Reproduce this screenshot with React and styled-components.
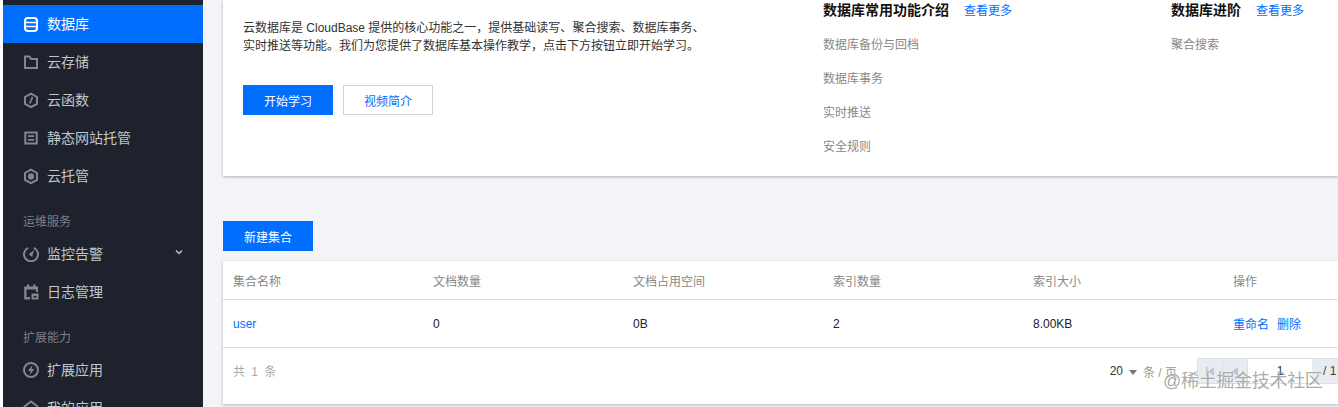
import React from "react";
import styled, { createGlobalStyle } from "styled-components";

const Global = createGlobalStyle`
  html, body { margin: 0; padding: 0; height: 407px; overflow: hidden; background: #fff; }
  body { font-family: "Liberation Sans", "Noto Sans CJK SC", sans-serif; font-size: 12px; color: #000; }
`;

const Page = styled.div`
  display: flex; width: 1338px; height: 407px; padding-left: 3px; box-sizing: border-box;
  overflow: hidden; position: relative;
`;
const Sidebar = styled.nav`
  flex: 0 0 200px; background: #1e222d; padding-top: 5px; overflow: hidden;
`;
const NavItem = styled.div`
  display: flex; align-items: center; height: 38px; padding-left: 20px; font-size: 14px;
  color: ${p => (p.$active ? "#fff" : "#c1c6c8")};
  background: ${p => (p.$active ? "#006eff" : "transparent")};
  svg { flex: 0 0 16px; width: 16px; height: 16px; margin-right: 8px; color: ${p => (p.$active ? "#fff" : "#83868d")}; }
`;
const NavLabel = styled.span`flex: 1; margin-top: -2px;`;
const Chevron = styled.svg`
  && { flex: 0 0 8px; width: 8px; height: 6px; margin: 0 20px 4px 0; color: #c1c6c8; }
`;
const GroupLabel = styled.div`
  padding: 15px 0 1px 20px; height: 24px; line-height: 24px; font-size: 12px; color: #7b7f88;
`;
const Main = styled.main`
  flex: 1; min-width: 0; background: #f2f4f8; padding-left: 20px;
`;
const Card = styled.section`
  background: #fff; box-shadow: 0 1px 3px rgba(0, 0, 0, 0.28);
`;
const IntroCard = styled(Card)`
  display: flex; height: 176px; padding-left: 20px;
`;
const Intro = styled.div`flex: 0 0 580px; padding-top: 19px;`;
const IntroText = styled.p`margin: 0 0 30px; line-height: 18px; font-size: 12px; color: #333;`;
const ButtonRow = styled.div`display: flex; gap: 10px;`;
const Button = styled.button`
  width: 90px; height: 30px; padding: 0; box-sizing: border-box; font: inherit; font-size: 12px;
  background: ${p => (p.$plain ? "#fff" : "#006eff")};
  color: ${p => (p.$plain ? "#006eff" : "#fff")};
  border: ${p => (p.$plain ? "1px solid #cfd5de" : "0")};
`;
const Topic = styled.div`flex: 0 0 ${p => p.$width}px;`;
const TopicHead = styled.div`display: flex; align-items: center; height: 18px; gap: 15px;`;
const TopicTitle = styled.h3`margin: 0; font-size: 14px; font-weight: 700; color: #111;`;
const Link = styled.a`color: #006eff; font-size: 12px;`;
const TopicList = styled.ul`margin: 18px 0 0; padding: 0; list-style: none;`;
const TopicItem = styled.li`height: 18px; line-height: 18px; margin-bottom: 16px; color: #888;`;
const NewBar = styled.div`padding: 45px 0 10px;`;
const Row = styled.div`
  display: grid; grid-template-columns: repeat(6, 200px); align-items: center;
  height: ${p => p.$h}px; border-bottom: 1px solid #dcdfe4;
  color: ${p => (p.$head ? "#888" : "#222")};
`;
const Cell = styled.div`padding-left: 10px;`;
const Actions = styled(Cell)`display: flex; gap: 8px;`;
const Footer = styled.div`
  display: flex; align-items: flex-start; height: 56px; padding: 10px 0 0 10px; box-sizing: border-box;
`;
const Total = styled.div`flex: 1; line-height: 26px; color: #aaa; word-spacing: 3px; padding-top: 1px;`;
const PageSize = styled.div`display: flex; align-items: center; height: 26px; color: #333;`;
const Caret = styled.i`
  width: 0; height: 0; margin: 2px 6px 0 6px; border: 4px solid transparent; border-top: 5px solid #777; border-bottom: 0;
`;
const PageUnit = styled.span`color: #999; margin-right: 20px;`;
const Pager = styled.div`display: flex; height: 26px; border: 1px solid #dcdfe4; border-right: 0; box-sizing: border-box;`;
const PageBtn = styled.div`
  width: 25px; display: flex; align-items: center; justify-content: center; background: #e8ebf0;
  border-right: 1px solid #dcdfe4; box-sizing: border-box; color: #c2c6cc;
  svg { width: 8px; height: 9px; }
`;
const PageInput = styled.div`
  width: 64px; text-align: center; line-height: 24px; color: #333; background: #fff;
`;
const PageTotal = styled.div`width: 26px; background: #e8ebf0; line-height: 24px; padding-left: 11px; box-sizing: border-box; white-space: nowrap; color: #444;`;
const Watermark = styled.div`
  position: absolute; left: 1163px; top: 369px; font-size: 18px; line-height: 24px; white-space: nowrap;
  letter-spacing: -0.3px; color: rgba(130, 130, 130, 0.68); text-shadow: 0 0 1px rgba(255,255,255,.9);
`;

const Ico = ({ children, fill }) => (
  <svg viewBox="0 0 16 16" fill={fill ? "currentColor" : "none"} stroke={fill ? "none" : "currentColor"} strokeWidth="2">{children}</svg>
);

const hex = "M8 1.600l6 3.400v6.800l-6 3.400-6-3.400V5z";

const items1 = [
  ["数据库", <Ico><rect x="2" y="2" width="12" height="13" rx="3" /><path d="M2 6.500h12M2 10.500h12" strokeWidth="1.700" /></Ico>, true],
  ["云存储", <Ico><path d="M2 2.500h4.500l1.500 2.500h6v9H2z" /></Ico>],
  ["云函数", <Ico><path d={hex} /><path d="M9.500 5L6.800 11.500" strokeWidth="1.800" /></Ico>],
  ["静态网站托管", <Ico><path d="M2.300 2.600h11.400v10.800H2.300z" /><path d="M5 6.200h6M5 9.800h6" strokeWidth="1.800" /></Ico>],
  ["云托管", <Ico><path d={hex} /><circle cx="8" cy="8.400" r="3.100" fill="currentColor" stroke="none" /></Ico>],
];

const topics1 = ["数据库备份与回档", "数据库事务", "实时推送", "安全规则"];

export default function App() {
  return (
    <Page>
      <Global />
      <Sidebar>
        {items1.map(([t, icon, active]) => (
          <NavItem key={t} $active={active}>{icon}<NavLabel>{t}</NavLabel></NavItem>
        ))}
        <GroupLabel>运维服务</GroupLabel>
        <NavItem>
          <Ico><path d="M5.200 1.800A7 7 0 1 0 10.800 1.800" /><path d="M11 4L9.200 10.800 5.600 8.600z" fill="currentColor" stroke="none" /></Ico>
          <NavLabel>监控告警</NavLabel>
          <Chevron viewBox="0 0 8 6" fill="none" stroke="currentColor" strokeWidth="1.500"><path d="M1 1.500l3 3 3-3" /></Chevron>
        </NavItem>
        <NavItem>
          <Ico fill><path d="M4 0.500h2.200V2.500h4V0.500h2.200V2.500H15V8h-2V5.500H3.500V13H7V15.500H1.200V2.500H4z" /><path d="M8.500 9.500H15.500V15.500H8.500zM10.500 12v1.500h3V12z" fillRule="evenodd" /></Ico>
          <NavLabel>日志管理</NavLabel>
        </NavItem>
        <GroupLabel>扩展能力</GroupLabel>
        <NavItem>
          <Ico><circle cx="8" cy="8" r="7" /><path d="M9.500 3L4.800 9h2.700L6.700 13l4.700-6H8.600z" fill="currentColor" stroke="none" /></Ico>
          <NavLabel>扩展应用</NavLabel>
        </NavItem>
        <NavItem>
          <Ico><path d="M1.500 6.500L8 1.500l6.500 5V15h-13z" /></Ico>
          <NavLabel>我的应用</NavLabel>
        </NavItem>
      </Sidebar>
      <Main>
        <IntroCard>
          <Intro>
            <IntroText>
              云数据库是 CloudBase 提供的核心功能之一，提供基础读写、聚合搜索、数据库事务、<br />
              实时推送等功能。我们为您提供了数据库基本操作教学，点击下方按钮立即开始学习。
            </IntroText>
            <ButtonRow>
              <Button>开始学习</Button>
              <Button $plain>视频简介</Button>
            </ButtonRow>
          </Intro>
          <Topic $width={348}>
            <TopicHead><TopicTitle>数据库常用功能介绍</TopicTitle><Link>查看更多</Link></TopicHead>
            <TopicList>{topics1.map(t => <TopicItem key={t}>{t}</TopicItem>)}</TopicList>
          </Topic>
          <Topic $width={147}>
            <TopicHead><TopicTitle>数据库进阶</TopicTitle><Link>查看更多</Link></TopicHead>
            <TopicList><TopicItem>聚合搜索</TopicItem></TopicList>
          </Topic>
        </IntroCard>
        <NewBar><Button>新建集合</Button></NewBar>
        <Card>
          <Row $head $h={38}>
            {["集合名称", "文档数量", "文档占用空间", "索引数量", "索引大小", "操作"].map(t => <Cell key={t}>{t}</Cell>)}
          </Row>
          <Row $h={47}>
            <Cell><Link>user</Link></Cell>
            <Cell>0</Cell>
            <Cell>0B</Cell>
            <Cell>2</Cell>
            <Cell>8.00KB</Cell>
            <Actions><Link>重命名</Link><Link>删除</Link></Actions>
          </Row>
          <Footer>
            <Total>共 1 条</Total>
            <PageSize>20<Caret /><PageUnit>条 / 页</PageUnit></PageSize>
            <Pager>
              <PageBtn><svg viewBox="0 0 8 9" fill="currentColor"><path d="M0 0h1.500v9H0zM8 0v9L2 4.500z" /></svg></PageBtn>
              <PageBtn><svg viewBox="0 0 8 9" fill="currentColor"><path d="M7 0v9L1 4.500z" /></svg></PageBtn>
              <PageInput>1</PageInput>
              <PageTotal>/ 1</PageTotal>
            </Pager>
          </Footer>
        </Card>
      </Main>
      <Watermark>@稀土掘金技术社区</Watermark>
    </Page>
  );
}
